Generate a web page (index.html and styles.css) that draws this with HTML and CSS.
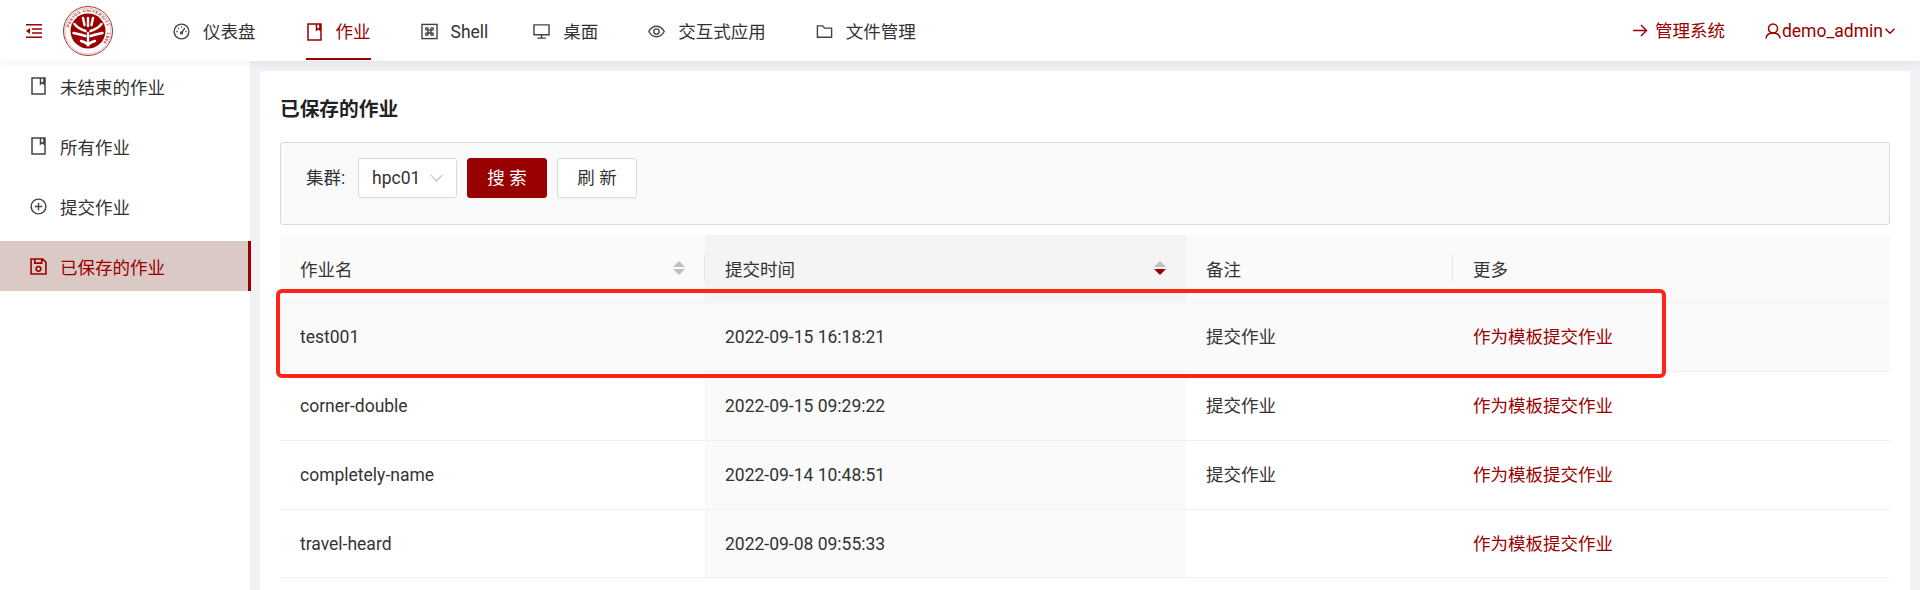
FILE: index.html
```html
<!DOCTYPE html>
<html lang="zh">
<head>
<meta charset="utf-8">
<title>已保存的作业</title>
<link rel="stylesheet" href="styles.css">
</head>
<body>
<header class="topbar">
  <svg class="fold" viewBox="0 0 16 14"><path class="fill" d="M0 0h16v1.600H0zM0 12.400h16V14H0zM6 4.200h10v1.600H6zM6 8.200h10v1.600H6zM0 7l4-3v6z"/></svg>
  <svg class="logo" viewBox="0 0 50 50">
    <circle cx="25" cy="25" r="24.500" fill="#fff" stroke="#a33" stroke-width="1"/>
    <circle cx="25" cy="25" r="23" fill="none" stroke="#c77" stroke-width=".5"/>
    <defs><path id="ring" d="M25 25m-19 0a19 19 0 1 1 38 0a19 19 0 1 1-38 0"/></defs>
    <text class="ringtext"><textPath href="#ring" startOffset="3%">PEKING UNIVERSITY · 1898 ·</textPath></text>
    <circle cx="25" cy="25" r="17.500" fill="#990000"/>
    <g fill="none" stroke="#fff" stroke-width="2.400" stroke-linecap="round">
      <path d="M25 39V27"/><path d="M25 39c-1.500-2-3-3-7-4"/><path d="M25 39c1.500-2 3-3 7-4"/>
      <path d="M25 12v8"/><path d="M20 12l1.500 7"/><path d="M30 12l-1.500 7"/>
      <path d="M22.500 25c-3-1-8-3-11-7"/><path d="M27.500 25c3-1 8-3 11-7"/>
      <path d="M22.500 30c-3-1-7-2-12-3"/><path d="M27.500 30c3-1 7-2 12-3"/>
    </g>
  </svg>
  <nav class="menu">
    <a class="menu-item"><svg class="ico" viewBox="0 0 18 18"><circle cx="9" cy="9" r="7.800"/><path d="M9 10.500 12.500 5.500M3.600 9h1.400M13 9h1.400M5.200 5.200l1 1M9 3.400v1.400"/><circle cx="9" cy="10.500" r="1"/></svg>仪表盘</a>
    <a class="menu-item active"><svg class="ico book" viewBox="0 0 15 18"><path d="M1 1h13v16H1zM9.500 1v6l1.700-1.300L12.900 7V1"/></svg>作业</a>
    <a class="menu-item tight"><svg class="ico" viewBox="0 0 18 18"><rect x="1" y="1.500" width="16" height="15"/><path d="M7.500 7.500h3v3h-3zM7.500 7.500H6.200a1.300 1.300 0 1 1 1.300-1.300zM10.500 7.500V6.200a1.300 1.300 0 1 1 1.300 1.300zM7.500 10.500v1.300a1.300 1.300 0 1 1-1.300-1.300zM10.500 10.500h1.300a1.300 1.300 0 1 1-1.300 1.300z"/></svg>Shell</a>
    <a class="menu-item"><svg class="ico" viewBox="0 0 18 18"><path d="M1 2h16v10.500H1zM9 12.500V16M4.500 16h9"/></svg>桌面</a>
    <a class="menu-item"><svg class="ico" viewBox="0 0 18 18"><path d="M.8 9C3 5.200 5.700 3.500 9 3.500s6 1.700 8.200 5.500c-2.200 3.800-4.900 5.500-8.200 5.500S3 12.800.8 9z"/><circle cx="9" cy="9" r="2.800"/></svg>交互式应用</a>
    <a class="menu-item"><svg class="ico" viewBox="0 0 18 18"><path d="M1.500 3h5.500l2 2.400h7.500v9.600H1.500z"/></svg>文件管理</a>
  </nav>
  <div class="top-right">
    <a class="admin"><svg class="ico-r arrow" viewBox="0 0 16 14"><path d="M0 7h14.500M8.500 1l6 6-6 6"/></svg>管理系统</a>
    <a class="user"><svg class="ico-r person" viewBox="0 0 16 16"><circle cx="8" cy="5.500" r="4.500"/><path d="M1 15.500c.4-3.500 3-5.500 7-5.500s6.600 2 7 5.500"/></svg>demo_admin<svg class="ico-r chev" viewBox="0 0 10 6"><path d="M.5.800 5 5.200 9.500.8"/></svg></a>
  </div>
</header>
<div class="body-row">
  <aside class="side">
    <a class="side-item"><svg class="ico book" viewBox="0 0 15 18"><path d="M1 1h13v16H1zM9.500 1v6l1.700-1.300L12.900 7V1"/></svg>未结束的作业</a>
    <a class="side-item"><svg class="ico book" viewBox="0 0 15 18"><path d="M1 1h13v16H1zM9.500 1v6l1.700-1.300L12.900 7V1"/></svg>所有作业</a>
    <a class="side-item"><svg class="ico" viewBox="0 0 18 18"><circle cx="9" cy="9" r="7.800"/><path d="M9 5v8M5 9h8"/></svg>提交作业</a>
    <a class="side-item active"><svg class="ico" viewBox="0 0 16 16"><path d="M1 1h11l3 3v11H1zM4.500 1v3.800h6.500V1"/><circle cx="8" cy="10.200" r="2.200"/></svg>已保存的作业</a>
  </aside>
  <main class="main">
    <section class="panel">
      <h1 class="title">已保存的作业</h1>
      <form class="filter">
        <span class="label">集群:</span>
        <div class="select">hpc01<svg class="select-arrow" viewBox="0 0 14 8"><path d="M.5.500 7 7.200 13.500.5"/></svg></div>
        <button class="btn primary" type="button">搜 索</button>
        <button class="btn" type="button">刷 新</button>
      </form>
      <table class="jobs">
        <colgroup><col class="c1"><col class="c2"><col class="c3"><col></colgroup>
        <thead>
          <tr>
            <th><span class="th-in sep">作业名<span class="sort"><i class="up"></i><i class="down"></i></span></span></th>
            <th class="sorted"><span class="th-in">提交时间<span class="sort"><i class="up"></i><i class="down on"></i></span></span></th>
            <th><span class="th-in sep">备注</span></th>
            <th><span class="th-in">更多</span></th>
          </tr>
        </thead>
        <tbody>
          <tr class="hover"><td>test001</td><td class="sorted">2022-09-15 16:18:21</td><td>提交作业</td><td><a class="link">作为模板提交作业</a></td></tr>
          <tr><td>corner-double</td><td class="sorted">2022-09-15 09:29:22</td><td>提交作业</td><td><a class="link">作为模板提交作业</a></td></tr>
          <tr><td>completely-name</td><td class="sorted">2022-09-14 10:48:51</td><td>提交作业</td><td><a class="link">作为模板提交作业</a></td></tr>
          <tr><td>travel-heard</td><td class="sorted">2022-09-08 09:55:33</td><td></td><td><a class="link">作为模板提交作业</a></td></tr>
        </tbody>
      </table>
    </section>
  </main>
</div>
<div class="annotation"></div>
</body>
</html>
```

FILE: styles.css
```css
* { box-sizing: border-box; }
html, body { margin: 0; height: 100%; }
body {
  overflow: hidden;
  background: #f0f1f5;
  color: #333;
  font-family: Roboto, "Noto Sans CJK SC", sans-serif;
  font-size: 17.5px;
  line-height: 24px;
  display: flex;
  flex-direction: column;
}
a { color: inherit; text-decoration: none; }

.topbar {
  height: 61px;
  flex: none;
  background: #fff;
  display: flex;
  align-items: center;
  padding-left: 26px;
  box-shadow: 0 2px 8px rgba(0,0,0,.06);
  position: relative;
  z-index: 2;
}
.fold { width: 16px; height: 14px; margin-right: 21px; margin-top: 1px; }
.fold .fill { fill: #990000; }
.logo { width: 50px; height: 50px; margin-right: 60px; }
.ringtext { font: 700 4.2px "Liberation Sans", sans-serif; fill: #a33; letter-spacing: .55px; }

.menu { display: flex; height: 60px; align-self: flex-start; }
.menu-item {
  display: flex;
  align-items: center;
  gap: 13px;
  margin-right: 50px;
  border-bottom: 2px solid transparent;
  padding-top: 6px;
}
.menu-item .ico { margin-top: -1px; }
.menu-item.tight { margin-right: 45px; }
.menu-item.active { color: #990000; border-bottom-color: #990000; }
.ico { width: 17px; height: 17px; fill: none; stroke: #444; stroke-width: 1.5; flex: none; }
.ico.book { width: 15px; height: 18px; margin-left: 1px; margin-right: 1px; }
.menu-item.active .ico, .side-item.active .ico { stroke: #990000; }

.top-right { margin-left: auto; display: flex; align-items: center; color: #990000; padding-right: 25px; }
.admin { display: flex; align-items: center; gap: 7px; margin-right: 40px; }
.user { display: flex; align-items: center; }
.ico-r { fill: none; stroke: #990000; stroke-width: 1.5; }
.arrow { width: 15px; height: 13px; }
.person { width: 16px; height: 16px; margin-right: 1px; }
.chev { width: 10px; height: 6px; margin-left: 2px; }

.body-row { flex: 1; display: flex; min-height: 0; }
.side { width: 250px; flex: none; background: #fff; display: flex; flex-direction: column; gap: 10px; }
.side-item {
  height: 50px;
  display: flex;
  align-items: center;
  gap: 13px;
  padding: 3px 0 0 30px;
}
.side-item .ico { margin-top: -3px; }
.side-item.active {
  background: #dac9c5;
  color: #990000;
  border-right: 3px solid #990000;
  width: 251px;
}
.main { flex: 1; padding: 10px 10px 0 10px; min-width: 0; }
.panel { height: 100%; background: #fff; padding: 0 20px; }
.title { margin: 0; padding-top: 25px; height: 71px; font-size: 19.7px; font-weight: 700; line-height: 28px; color: #222; }

.filter {
  height: 83px;
  background: #fafafa;
  border: 1px solid #d9d9d9;
  border-radius: 3px;
  padding: 15px 25px 0;
  display: flex;
  align-items: flex-start;
  margin-bottom: 10px;
}
.label { line-height: 40px; margin-right: 10px; width: 42px; white-space: nowrap; }
.select {
  width: 99px;
  height: 40px;
  background: #fff;
  border: 1px solid #d9d9d9;
  border-radius: 3px;
  padding-left: 13px;
  display: flex;
  align-items: center;
  margin-right: 10px;
}
.select-arrow { width: 13px; height: 8px; margin-left: 10px; fill: none; stroke: #bbb; stroke-width: 1.1; }
.btn {
  width: 80px;
  height: 40px;
  margin-right: 10px;
  background: #fff;
  border: 1px solid #d9d9d9;
  border-radius: 3px;
  font: inherit;
  color: #333;
  padding: 0;
  box-shadow: 0 2px 0 rgba(0,0,0,.02);
}
.btn.primary { background: #990000; border-color: #990000; color: #fff; }

.jobs { width: 100%; border-collapse: collapse; table-layout: fixed; }
.c1 { width: 425px; }
.c2 { width: 481px; }
.c3 { width: 267px; }
.jobs th {
  height: 67px;
  background: #fafafa;
  font-weight: 400;
  text-align: left;
  padding: 0 0 0 20px;
  border-bottom: 1px solid #f0f0f0;
}
.jobs th.sorted { background: #f4f4f4; }
.th-in { display: flex; align-items: center; justify-content: space-between; height: 66px; padding: 3px 20px 0 0; position: relative; }
.sort { margin-top: -3px; }
.sep::after { content: ""; position: absolute; right: 0; top: 20px; height: 26px; width: 1px; background: #e8e8e8; }
.sort { display: flex; flex-direction: column; gap: 2px; }
.sort i { display: block; width: 0; height: 0; border-left: 6px solid transparent; border-right: 6px solid transparent; }
.sort .up { border-bottom: 6px solid #bfbfbf; }
.sort .down { border-top: 6px solid #bfbfbf; }
.sort .down.on { border-top-color: #990000; }
.jobs td { height: 69px; padding: 1px 20px 0; border-bottom: 1px solid #f0f0f0; background: #fff; }
.jobs tr:last-child td { height: 68px; }
.jobs td.sorted { background: #fafafa; }
.jobs tr.hover td { background: #fafafa; }
.link { color: #990000; }

.annotation {
  position: absolute;
  left: 276px;
  top: 289px;
  width: 1390px;
  height: 89px;
  border: 4px solid #ff2318;
  border-radius: 6px;
  z-index: 3;
}
```
